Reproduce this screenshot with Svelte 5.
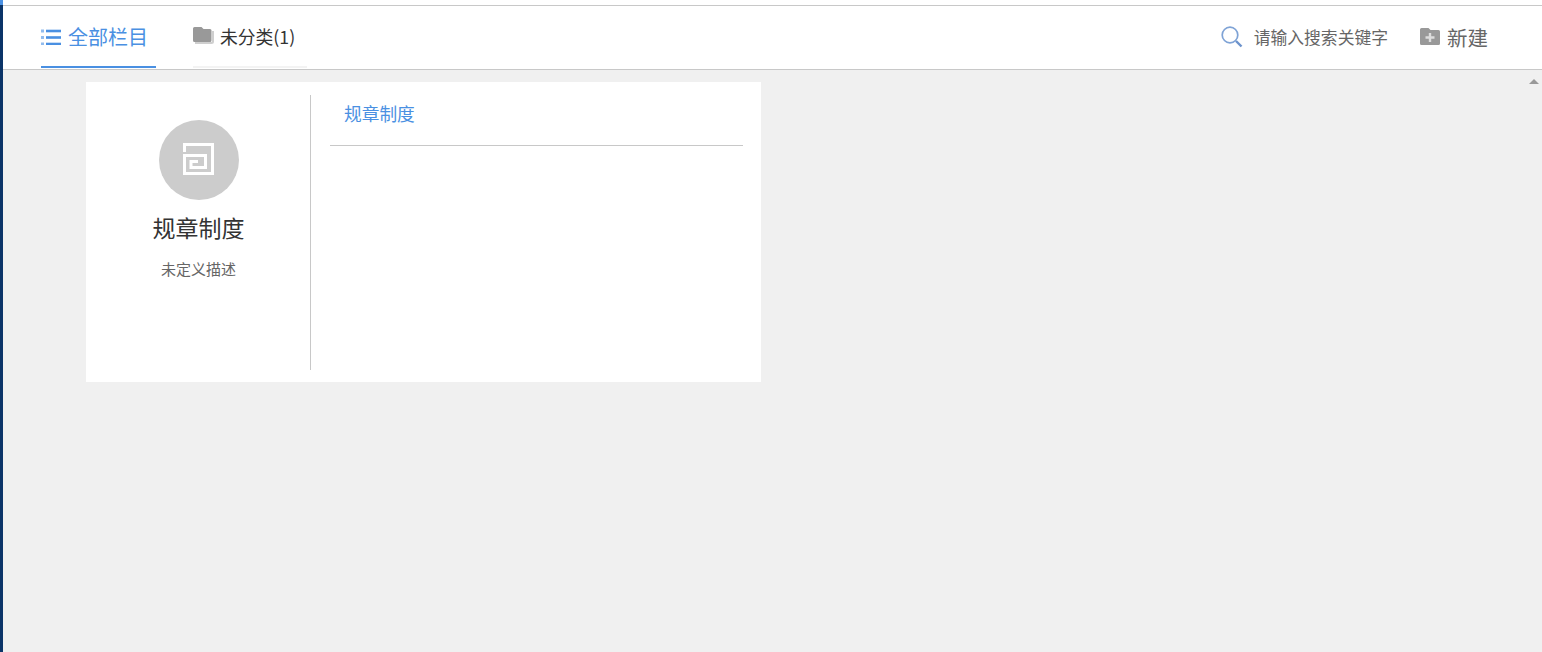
<script lang="ts">
  const sections = [{ name: '规章制度', desc: '未定义描述', links: ['规章制度'] }]
</script>

<div class="page">
  <div class="rail"><div class="rail-top"></div></div>
  <div class="body">
    <header class="topbar">
      <nav class="tabs">
        <div class="tab active">
          <svg width="20" height="16" viewBox="0 0 20 16">
            <g fill="#4a90e2">
              <rect x="0" y="0.500" width="3" height="3" opacity="0.6" />
              <rect x="0" y="7" width="3" height="3" opacity="0.6" />
              <rect x="0" y="13.500" width="3" height="3" opacity="0.6" />
              <rect x="5" y="0.700" width="15" height="2.600" />
              <rect x="5" y="7.200" width="15" height="2.600" />
              <rect x="5" y="13.700" width="15" height="2.600" />
            </g>
          </svg>
          <span>全部栏目</span>
        </div>
        <div class="tab other">
          <svg width="21" height="18" viewBox="0 0 21 18">
            <path d="M2 16h16.500a1.500 1.500 0 0 0 1.500-1.500V4" fill="none" stroke="#cfcfcf" stroke-width="2" />
            <path d="M0 1.500a1.500 1.500 0 0 1 1.500-1.500h7l2 2h6.500a1.500 1.500 0 0 1 1.500 1.500v10a1.500 1.500 0 0 1-1.500 1.500h-15.500a1.500 1.500 0 0 1-1.500-1.500z" fill="#999" />
          </svg>
          <span>未分类(1)</span>
        </div>
      </nav>
      <div class="tools">
        <div class="search">
          <svg width="22" height="22" viewBox="0 0 22 22">
            <circle cx="9" cy="9" r="7.800" fill="none" stroke="#7fa3d6" stroke-width="1.700" />
            <path d="M15 15l5.500 5.500" stroke="#6d93cc" stroke-width="2.400" />
          </svg>
          <span>请输入搜索关键字</span>
        </div>
        <div class="create">
          <svg width="20" height="17" viewBox="0 0 20 17">
            <path d="M0 1.500a1.500 1.500 0 0 1 1.500-1.500h7l2 2h8a1.500 1.500 0 0 1 1.500 1.500v12a1.500 1.500 0 0 1-1.500 1.500h-17a1.500 1.500 0 0 1-1.500-1.500z" fill="#999" />
            <path d="M10 5v9M5.500 9.500h9" stroke="#ddd" stroke-width="2.400" />
          </svg>
          <span>新建</span>
        </div>
      </div>
    </header>

    <main class="content">
      {#each sections as section}
        <section class="card">
          <div class="intro">
            <div class="badge">
              <svg width="34" height="34" viewBox="0 0 34 34" fill="none" stroke="#fff" stroke-width="3">
                <path d="M2.500 9V1.500H30.500V30.500H2.500V12.500H23.500V24.500H9V18.500H16" />
              </svg>
            </div>
            <h2>{section.name}</h2>
            <p>{section.desc}</p>
          </div>
          <div class="links">
            {#each section.links as link}
              <div class="link">{link}</div>
            {/each}
          </div>
        </section>
      {/each}
      <div class="scroll-up"></div>
    </main>
  </div>
</div>

<style>
  :global(body) {
    margin: 0;
    background: #fff;
  }

  .page {
    height: 652px;
    display: flex;
    font-family: "Noto Sans CJK SC", "Liberation Sans", sans-serif;
    overflow: hidden;
  }

  .rail {
    width: 3px;
    background: #0b3468;
    flex-shrink: 0;
  }

  .rail-top {
    height: 5px;
    background: #4a90e2;
  }

  .body {
    flex: 1;
    display: flex;
    flex-direction: column;
    background: #f0f0f0;
  }

  .topbar {
    height: 65px;
    box-sizing: border-box;
    margin-top: 5px;
    border-top: 1px solid #c8c8c8;
    border-bottom: 1px solid #c8c8c8;
    background: #fff;
    display: flex;
    justify-content: space-between;
    padding: 0 54px 0 38px;
    flex-shrink: 0;
    box-shadow: 0 -5px 0 #fff;
  }

  .tabs {
    display: flex;
    gap: 37px;
  }

  .tab {
    height: 62px;
    box-sizing: border-box;
    display: flex;
    align-items: center;
    gap: 7px;
    border-bottom: 2px solid transparent;
    padding-top: 1px;
  }

  .tab.active {
    width: 115px;
    border-bottom-color: #4a90e2;
    color: #4a90e2;
    font-size: 20px;
  }

  .tab.other {
    gap: 6px;
    padding-top: 0;
    color: #333;
    font-size: 17.800px;
    width: 114px;
    border-bottom-color: #f3f3f3;
  }

  .tools {
    display: flex;
    align-items: center;
    gap: 32px;
    color: #666;
    padding-bottom: 2px;
  }

  .search,
  .create {
    display: flex;
    align-items: center;
  }

  .search {
    gap: 11px;
    font-size: 16.800px;
  }

  .create {
    gap: 7px;
    font-size: 20.500px;
  }

  .content {
    flex: 1;
    position: relative;
    padding: 12px 83px;
  }

  .card {
    width: 675px;
    height: 300px;
    box-sizing: border-box;
    padding: 13px 18px 12px 0;
    background: #fff;
    display: flex;
  }

  .intro {
    width: 225px;
    box-sizing: border-box;
    border-right: 1px solid #c8c8c8;
    display: flex;
    flex-direction: column;
    align-items: center;
    padding: 25px 0 0 1px;
    flex-shrink: 0;
  }

  .badge {
    width: 80px;
    height: 80px;
    border-radius: 50%;
    background: #ccc;
    display: flex;
    align-items: center;
    justify-content: center;
  }

  h2 {
    margin: 12px 0 0;
    font-size: 23px;
    font-weight: 400;
    line-height: 30px;
    color: #333;
  }

  p {
    margin: 17px 0 0;
    font-size: 15px;
    line-height: 20px;
    color: #666;
  }

  .links {
    flex: 1;
    margin-left: 19px;
  }

  .link {
    height: 51px;
    box-sizing: border-box;
    padding: 0 14px;
    border-bottom: 1px solid #c8c8c8;
    color: #4a90e2;
    font-size: 17.700px;
    line-height: 37px;
  }

  .scroll-up {
    position: absolute;
    top: 9px;
    right: 3px;
    width: 0;
    height: 0;
    border-left: 5px solid transparent;
    border-right: 5px solid transparent;
    border-bottom: 5px solid #999;
  }
</style>
